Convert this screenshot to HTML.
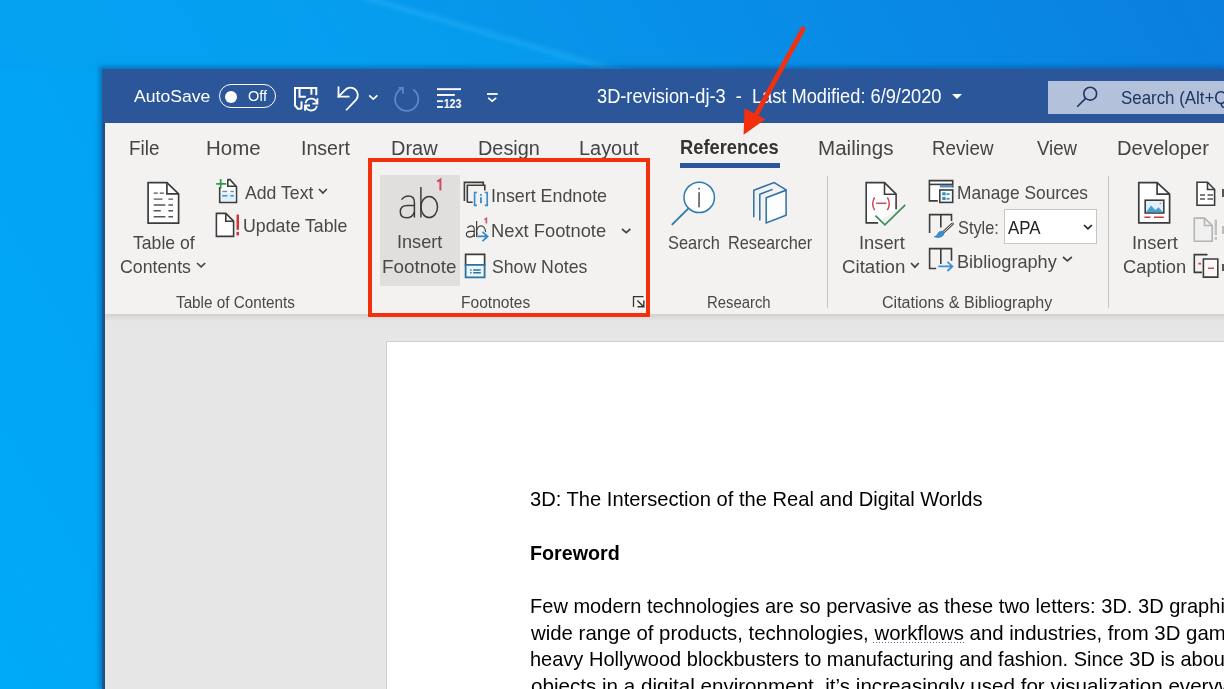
<!DOCTYPE html><html><head><meta charset="utf-8"><style>
html,body{margin:0;padding:0;width:1224px;height:689px;overflow:hidden;}
body{position:relative;font-family:"Liberation Sans",sans-serif;background:#0a8ee6;}
.t{position:absolute;white-space:nowrap;transform-origin:0 0;font-family:"Liberation Sans",sans-serif;}
svg{overflow:visible}
</style></head><body><svg style="position:absolute;left:0;top:0" width="1224" height="689">
<defs>
<linearGradient id="dg" x1="0" y1="689" x2="1224" y2="0" gradientUnits="userSpaceOnUse">
<stop offset="0" stop-color="#00aaf7"/><stop offset="0.35" stop-color="#03a0f2"/><stop offset="0.55" stop-color="#0795ea"/><stop offset="1" stop-color="#0a7fe0"/></linearGradient>
<filter id="bl" x="-20%" y="-200%" width="140%" height="500%"><feGaussianBlur stdDeviation="2.5"/></filter>
</defs>
<rect width="1224" height="689" fill="url(#dg)"/>
<polygon points="0,0 375,0 612,70 0,70" fill="#06a0f0" opacity="0.6"/>
<line x1="354" y1="-6" x2="634" y2="75.6" stroke="#40c0ff" stroke-width="3" opacity="0.55" filter="url(#bl)"/>
</svg>
<div style="position:absolute;left:99px;top:66px;width:1125px;height:623px;background:rgba(0,50,110,0.35);filter:blur(2px)"></div>
<div style="position:absolute;left:102px;top:69px;width:1122px;height:54px;background:#2b579a"></div>
<div style="position:absolute;left:104.8px;top:122.6px;width:1119.2px;height:191.4px;background:#f3f2f1"></div>
<div style="position:absolute;left:104.8px;top:314px;width:1119.2px;height:375px;background:#e6e6e6"></div>
<div style="position:absolute;left:104.8px;top:314px;width:1119.2px;height:7px;background:linear-gradient(#d3d1cf,#e6e6e6)"></div>
<div style="position:absolute;left:102px;top:123px;width:2.8px;height:566px;background:linear-gradient(90deg,#1d5b98,#234a80)"></div>
<div style="position:absolute;left:386px;top:341px;width:838px;height:348px;background:#fff;border-left:1px solid #cfcfcf;border-top:1px solid #cfcfcf;box-sizing:border-box"></div>
<div class="t" style="left:134.46px;top:89.38px;font-size:16.8px;line-height:16.8px;color:#ffffff;font-weight:normal;transform:scaleX(1.0476);">AutoSave</div>
<div style="position:absolute;left:219px;top:84px;width:57px;height:24px;border:1.7px solid #fff;border-radius:12px;box-sizing:border-box"></div>
<div style="position:absolute;left:225px;top:90.5px;width:12px;height:12px;background:#fff;border-radius:6px"></div>
<div class="t" style="left:247.71px;top:89.35px;font-size:14px;line-height:14px;color:#ffffff;font-weight:normal;transform:scaleX(1.0349);">Off</div>
<svg style="position:absolute;left:294px;top:86.6px" width="26" height="26" viewBox="0 0 26 26"><g fill="none" stroke="#fff" stroke-width="2"><path d="M7.5 21.7 H3.8 L1 18.5 V1 H22.3 V8.2"/><path d="M7.5 21.7 V14.3"/><path d="M5.5 1 V9.8 H11.8"/><path d="M17.4 1 V7.7"/></g><g fill="none" stroke="#fff" stroke-width="1.8"><path d="M11.5 16.3 A5.9 5.9 0 0 1 22.9 15.9"/><path d="M23.4 11.3 V16.6 H18.4"/><path d="M22.9 18.9 A5.9 5.9 0 0 1 11.5 19.3"/><path d="M11 23.8 V18.5 H16"/></g></svg>
<svg style="position:absolute;left:336px;top:85px" width="26" height="27" viewBox="0 0 26 27"><g fill="none" stroke="#fff" stroke-width="1.8" stroke-linecap="square"><path d="M2.5 2.5 V11.7 H12.6"/><path d="M2.5 11.7 L9 5.2 A7.3 7.3 0 0 1 20 14.8 L10.7 24.6"/></g></svg>
<svg style="position:absolute;left:368px;top:94px" width="10" height="6" viewBox="0 0 10 6"><path d="M1.2 1.3 L5.3 5.2 L9.4 1.3" fill="none" stroke="#fff" stroke-width="1.6"/></svg>
<svg style="position:absolute;left:392px;top:85px" width="28" height="28" viewBox="0 0 28 28"><g fill="none" stroke="#5f86c6" stroke-width="1.8"><path d="M21.2 4.6 A11.6 11.6 0 1 1 9.6 3.8"/><path d="M6.5 2.8 H10.9 V8.8"/></g></svg>
<svg style="position:absolute;left:436px;top:87px" width="27" height="23" viewBox="0 0 27 23"><g fill="#fff"><rect x="1" y="1.2" width="24" height="1.9"/><rect x="1" y="7" width="17.8" height="1.9"/><rect x="1" y="13.3" width="5.9" height="1.8"/><rect x="1" y="19.1" width="5.9" height="1.8"/></g><text x="7.8" y="21" font-family="Liberation Sans" font-size="12.5" font-weight="bold" fill="#fff" textLength="17.4" lengthAdjust="spacingAndGlyphs">123</text></svg>
<svg style="position:absolute;left:486px;top:92px" width="13" height="11" viewBox="0 0 13 11"><rect x="1" y="1.1" width="10.7" height="1.8" fill="#fff"/><path d="M2.2 5.8 L6.2 9.1 L10.2 5.8" fill="none" stroke="#fff" stroke-width="1.7"/></svg>
<div class="t" style="left:597.12px;top:87.41px;font-size:19.6px;line-height:19.6px;color:#ffffff;font-weight:normal;transform:scaleX(0.9303);white-space:pre;">3D-revision-dj-3  -  Last Modified: 6/9/2020</div>
<svg style="position:absolute;left:952px;top:94px" width="10" height="5" viewBox="0 0 10 5"><path d="M0 0 L10 0 L5 5 Z" fill="#fff"/></svg>
<div style="position:absolute;left:1048px;top:81px;width:176px;height:33px;background:#b3c2da"></div>
<div class="t" style="left:1120.94px;top:88.94px;font-size:18.5px;line-height:18.5px;color:#1d3563;font-weight:normal;transform:scaleX(0.9126);">Search (Alt+Q)</div>
<svg style="position:absolute;left:1074px;top:85px" width="30" height="25" viewBox="0 0 30 25"><circle cx="16.2" cy="8.7" r="6.4" fill="none" stroke="#1d3563" stroke-width="1.6"/><path d="M11.6 13.4 L3.2 21.8" stroke="#1d3563" stroke-width="1.6"/></svg>
<div class="t" style="left:129.44px;top:137.87px;font-size:20px;line-height:20px;color:#444444;font-weight:normal;transform:scaleX(0.9428);">File</div>
<div class="t" style="left:206.31px;top:137.87px;font-size:20px;line-height:20px;color:#444444;font-weight:normal;transform:scaleX(1.0226);">Home</div>
<div class="t" style="left:301.19px;top:137.87px;font-size:20px;line-height:20px;color:#444444;font-weight:normal;transform:scaleX(0.9792);">Insert</div>
<div class="t" style="left:391.35px;top:137.87px;font-size:20px;line-height:20px;color:#444444;font-weight:normal;transform:scaleX(0.9978);">Draw</div>
<div class="t" style="left:478.36px;top:137.87px;font-size:20px;line-height:20px;color:#444444;font-weight:normal;transform:scaleX(0.9941);">Design</div>
<div class="t" style="left:579.36px;top:137.87px;font-size:20px;line-height:20px;color:#444444;font-weight:normal;transform:scaleX(0.9957);">Layout</div>
<div class="t" style="left:818.30px;top:137.87px;font-size:20px;line-height:20px;color:#444444;font-weight:normal;transform:scaleX(1.0282);">Mailings</div>
<div class="t" style="left:932.45px;top:137.87px;font-size:20px;line-height:20px;color:#444444;font-weight:normal;transform:scaleX(0.9375);">Review</div>
<div class="t" style="left:1036.91px;top:137.87px;font-size:20px;line-height:20px;color:#444444;font-weight:normal;transform:scaleX(0.9313);">View</div>
<div class="t" style="left:1117.34px;top:137.87px;font-size:20px;line-height:20px;color:#444444;font-weight:normal;transform:scaleX(1.0090);">Developer</div>
<div class="t" style="left:680.06px;top:138.06px;font-size:19.3px;line-height:19.3px;color:#333333;font-weight:bold;transform:scaleX(0.9495);">References</div>
<div style="position:absolute;left:680px;top:163px;width:100px;height:5px;background:#2b579a"></div>
<svg style="position:absolute;left:146px;top:181px" width="35" height="45" viewBox="0 0 35 45"><path d="M2.1 1.6 H20.9 L32.6 12.8 V42.2 H2.1 Z" fill="#fff" stroke="#3c3c3c" stroke-width="1.7"/><path d="M20.9 1.6 V12.8 H32.6" fill="none" stroke="#3c3c3c" stroke-width="1.7"/><g stroke="#555" stroke-width="1.4"><path d="M7.7 12.1 H11.8 M13.8 12.1 H17.9 M7.7 18.1 H16.5 M22.4 18.1 H27 M7.7 24 H19.4 M22.4 24 H27 M7.7 29.8 H14.8 M22.4 29.8 H27 M7.7 35.8 H19.4 M22.4 35.8 H27"/></g></svg>
<div class="t" style="left:132.90px;top:233.64px;font-size:18.5px;line-height:18.5px;color:#484848;font-weight:normal;transform:scaleX(0.9530);">Table of</div>
<div class="t" style="left:119.81px;top:257.64px;font-size:18.5px;line-height:18.5px;color:#484848;font-weight:normal;transform:scaleX(0.9576);">Contents</div>
<svg style="position:absolute;left:195px;top:260.7px" width="12.199999999999989" height="7.800000000000011" viewBox="0 0 12.199999999999989 7.800000000000011"><path d="M2 2 L6.10 5.80 L10.20 2" fill="none" stroke="#444" stroke-width="1.7"/></svg>
<svg style="position:absolute;left:216px;top:177px" width="24" height="28" viewBox="0 0 24 28"><path d="M3.7 10 V25.4 H20.5 V9.8 L14 2.6 H11.5" fill="#fff" stroke="#3c3c3c" stroke-width="1.6"/><rect x="5" y="16" width="14.5" height="8.5" fill="#dff0fa"/><path d="M11.8 2.6 V9.2 H20.5" fill="none" stroke="#3c3c3c" stroke-width="1.6"/><path d="M0.2 6.9 H10.3 M4.7 2 V11.7" stroke="#2f9a4a" stroke-width="1.7"/><path d="M6.3 14.6 H11.3 M14.4 14.6 H17.9" stroke="#6b8fa8" stroke-width="1.5"/><path d="M6.3 18.8 H11.3 M14.4 18.8 H17.9" stroke="#3b8fcf" stroke-width="1.6"/></svg>
<div class="t" style="left:244.56px;top:183.64px;font-size:18.5px;line-height:18.5px;color:#484848;font-weight:normal;transform:scaleX(0.9544);">Add Text</div>
<svg style="position:absolute;left:317.4px;top:186.9px" width="11.800000000000011" height="8.099999999999994" viewBox="0 0 11.800000000000011 8.099999999999994"><path d="M2 2 L5.90 6.10 L9.80 2" fill="none" stroke="#444" stroke-width="1.7"/></svg>
<svg style="position:absolute;left:214px;top:211px" width="28" height="28" viewBox="0 0 28 28"><path d="M2.4 2.4 H11.8 L19.6 10.2 V25.4 H2.4 Z" fill="#fff" stroke="#3c3c3c" stroke-width="1.6"/><path d="M11.8 2.4 V10.2 H19.6" fill="none" stroke="#3c3c3c" stroke-width="1.6"/><rect x="22.5" y="3.6" width="2.5" height="15.2" fill="#d13438"/><rect x="22.5" y="20.9" width="2.5" height="3.5" fill="#d13438"/></svg>
<div class="t" style="left:243.22px;top:217.44px;font-size:18.5px;line-height:18.5px;color:#484848;font-weight:normal;transform:scaleX(0.9599);">Update Table</div>
<div style="position:absolute;left:380px;top:175px;width:80px;height:111px;background:#e1dfdd"></div>
<svg style="position:absolute;left:393px;top:175px" width="50" height="50" viewBox="0 0 50 50"><g fill="none" stroke="#3b3b3b" stroke-width="1.5"><path d="M8.6 24.6 Q11.5 21 15.5 21 Q21.4 21 21.4 27.5 V42.6"/><path d="M21.4 30.6 H14.5 Q7.3 30.6 7.3 36.8 Q7.3 42.8 13.6 42.8 Q19.5 42.8 21.4 37"/><path d="M27.9 12 V42.6"/><ellipse cx="36.2" cy="32" rx="8.3" ry="10.6"/></g></svg>
<svg style="position:absolute;left:436px;top:178px" width="8" height="14" viewBox="0 0 8 14"><path d="M1.2 3.6 L4.4 1.6 V12.6" fill="none" stroke="#cf4a58" stroke-width="2"/></svg>
<div class="t" style="left:396.82px;top:233.34px;font-size:18.5px;line-height:18.5px;color:#484848;font-weight:normal;transform:scaleX(0.9797);">Insert</div>
<div class="t" style="left:382.45px;top:257.74px;font-size:18.5px;line-height:18.5px;color:#484848;font-weight:normal;transform:scaleX(1.0182);">Footnote</div>
<svg style="position:absolute;left:462px;top:180px" width="30" height="28" viewBox="0 0 30 28"><g fill="none" stroke="#3c3c3c" stroke-width="1.6"><path d="M2.4 20.9 V2.4 H21.3 V5.6"/><path d="M5.3 22.3 H10.6 M5.3 22.3 V5.3 H22.8 V10.6"/></g><g fill="none" stroke="#3b8fcf" stroke-width="1.7"><path d="M15 12.5 H12.6 V25.3 H15 M22.8 12.5 H25.2 V25.3 H22.8"/></g><rect x="18" y="14" width="1.9" height="1.7" fill="#3b8fcf"/><rect x="18" y="17.2" width="1.9" height="6" fill="#3b8fcf"/></svg>
<div class="t" style="left:491.25px;top:186.84px;font-size:18.5px;line-height:18.5px;color:#484848;font-weight:normal;transform:scaleX(0.9644);">Insert Endnote</div>
<svg style="position:absolute;left:462px;top:216px" width="30" height="28" viewBox="0 0 30 28"><g fill="none" stroke="#3b3b3b" stroke-width="1.15"><path d="M5.3 11.8 Q7.1 9.8 9.2 9.8 Q12.2 9.8 12.2 13 V21.1"/><path d="M12.2 15.3 H8.6 Q4.4 15.3 4.4 18.3 Q4.4 21.1 7.8 21.1 Q11 21.1 12.2 18.4"/><path d="M14.6 5 V21"/><ellipse cx="19.05" cy="15.6" rx="4.45" ry="5.8"/></g><path d="M15.2 20.4 H25.7 M20.5 15.8 L25.7 20.4 L20.5 25.2" fill="none" stroke="#f3f2f1" stroke-width="3.6"/><path d="M15.2 20.4 H25.7 M20.5 15.8 L25.7 20.4 L20.5 25.2" fill="none" stroke="#2f86c4" stroke-width="1.6"/><path d="M22.4 3.6 L24.4 2.4 V7.6" fill="none" stroke="#c65a66" stroke-width="1.6"/></svg>
<div class="t" style="left:491.49px;top:222.14px;font-size:18.5px;line-height:18.5px;color:#484848;font-weight:normal;transform:scaleX(0.9906);">Next Footnote</div>
<svg style="position:absolute;left:619.6px;top:227.0px" width="12.399999999999977" height="7.700000000000017" viewBox="0 0 12.399999999999977 7.700000000000017"><path d="M2 2 L6.20 5.70 L10.40 2" fill="none" stroke="#444" stroke-width="1.7"/></svg>
<svg style="position:absolute;left:463px;top:252px" width="26" height="28" viewBox="0 0 26 28"><path d="M2.6 2.4 H21.6 V12.9 H2.6 Z" fill="#fff" stroke="#3c3c3c" stroke-width="1.7"/><path d="M2.6 12.9 H21.6 V25.4 H2.6 Z" fill="#e9f6fc" stroke="#2e70a0" stroke-width="1.8"/><path d="M7.2 18 H8.6 M7.2 20.8 H8.6 M10.2 18 H17.8 M10.2 20.8 H17.8" stroke="#2e70a0" stroke-width="1.4"/></svg>
<div class="t" style="left:492.20px;top:258.44px;font-size:18.5px;line-height:18.5px;color:#484848;font-weight:normal;transform:scaleX(0.9554);">Show Notes</div>
<div class="t" style="left:461.22px;top:294.86px;font-size:16px;line-height:16px;color:#484848;font-weight:normal;transform:scaleX(0.9729);">Footnotes</div>
<svg style="position:absolute;left:630px;top:293px" width="18" height="18" viewBox="0 0 18 18"><path d="M3.5 14 V3.7 H13.5" fill="none" stroke="#333" stroke-width="1.3"/><path d="M7.4 7.4 L13.4 13.4 M7.5 13.8 H13.8 V7.5" fill="none" stroke="#333" stroke-width="1.4"/></svg>
<div class="t" style="left:175.86px;top:294.86px;font-size:16px;line-height:16px;color:#484848;font-weight:normal;transform:scaleX(0.9539);">Table of Contents</div>
<svg style="position:absolute;left:668px;top:178px" width="50" height="50" viewBox="0 0 50 50"><circle cx="31.2" cy="19.4" r="15.2" fill="#fff" stroke="#2e7cab" stroke-width="1.5"/><path d="M20.2 30.6 L3.8 46.9" stroke="#2e7cab" stroke-width="1.9"/><rect x="30.4" y="9.8" width="1.4" height="1.6" fill="#333"/><rect x="30.4" y="14.2" width="1.3" height="15.1" fill="#333"/></svg>
<div class="t" style="left:668.26px;top:233.64px;font-size:18.5px;line-height:18.5px;color:#484848;font-weight:normal;transform:scaleX(0.8850);">Search</div>
<svg style="position:absolute;left:750px;top:179px" width="40" height="48" viewBox="0 0 40 48"><g fill="none" stroke="#2e6fa8" stroke-width="1.5" stroke-linejoin="miter"><path d="M3.8 38.3 V11.2 L24.2 3.6 L36.1 10.8"/><path d="M9.8 41.5 V15.2 L22.6 10.4"/></g><path d="M16.2 18.8 L36.1 11.2 V36.3 L16.2 43.9 Z" fill="#fbfdff" stroke="#2e6fa8" stroke-width="1.5"/></svg>
<div class="t" style="left:727.96px;top:233.64px;font-size:18.5px;line-height:18.5px;color:#484848;font-weight:normal;transform:scaleX(0.8806);">Researcher</div>
<div class="t" style="left:706.67px;top:294.86px;font-size:16px;line-height:16px;color:#484848;font-weight:normal;transform:scaleX(0.9286);">Research</div>
<div style="position:absolute;left:827px;top:176px;width:1px;height:132px;background:#c8c6c4"></div>
<svg style="position:absolute;left:862px;top:180px" width="48" height="48" viewBox="0 0 48 48"><path d="M16.1 42.9 H4.2 V2.6 H22.5 L34.1 14.2 V29.3" fill="#fff" stroke="#3c3c3c" stroke-width="1.6"/><path d="M22.5 2.6 V14.2 H34.1" fill="none" stroke="#3c3c3c" stroke-width="1.6"/><g fill="none" stroke="#c94a55" stroke-width="1.5"><path d="M12.6 17.3 Q8.9 23.7 12.6 30.1"/><path d="M25.4 17.3 Q29.1 23.7 25.4 30.1"/><path d="M14.1 23.3 H24.5"/></g><path d="M13.4 35.7 L22.9 44.9 L43.3 24.9" fill="none" stroke="#3a8f5a" stroke-width="1.7"/></svg>
<div class="t" style="left:858.71px;top:234.04px;font-size:18.5px;line-height:18.5px;color:#484848;font-weight:normal;transform:scaleX(0.9887);">Insert</div>
<div class="t" style="left:842.17px;top:258.14px;font-size:18.5px;line-height:18.5px;color:#484848;font-weight:normal;transform:scaleX(1.0093);">Citation</div>
<svg style="position:absolute;left:908.6px;top:260.9px" width="11.799999999999955" height="8.200000000000045" viewBox="0 0 11.799999999999955 8.200000000000045"><path d="M2 2 L5.90 6.20 L9.80 2" fill="none" stroke="#444" stroke-width="1.7"/></svg>
<svg style="position:absolute;left:927px;top:178px" width="28" height="28" viewBox="0 0 28 28"><path d="M10.8 22.9 H2.4 V2.6 H25.7 V9.5" fill="#fff" stroke="#3c3c3c" stroke-width="1.6"/><path d="M2.4 6.4 H25.7" stroke="#3c3c3c" stroke-width="1.6"/><rect x="12.8" y="6.9" width="12.7" height="2.6" fill="#5c8fc0"/><rect x="12.8" y="12" width="12.9" height="12.4" fill="#f4fbff" stroke="#3c3c3c" stroke-width="1.6"/><g fill="#3a86b8"><rect x="15.3" y="14.3" width="3.3" height="3"/><rect x="15.3" y="19" width="3.3" height="3"/><rect x="19.6" y="15.3" width="3" height="1.6"/><rect x="19.6" y="20" width="3" height="1.6"/></g></svg>
<div class="t" style="left:957.17px;top:183.84px;font-size:18.5px;line-height:18.5px;color:#484848;font-weight:normal;transform:scaleX(0.9369);">Manage Sources</div>
<svg style="position:absolute;left:927px;top:211px" width="28" height="28" viewBox="0 0 28 28"><path d="M2.6 21.9 V3.6 H13.8 V16.5 M13.8 3.6 H24.5 V10" fill="none" stroke="#3c3c3c" stroke-width="1.6"/><path d="M25.6 12.8 L16 21.5" stroke="#3c3c3c" stroke-width="2.6" stroke-linecap="round"/><path d="M25.6 12.8 L16 21.5" stroke="#fff" stroke-width="0.9" stroke-linecap="round"/><path d="M15.5 20.5 Q12 19.5 10.6 23 Q9.5 25.5 7.2 25.8 Q11.5 27.5 15 25.5 Q17.5 23.5 16.8 21.5 Z" fill="#3b8fcf" stroke="#2b6fa8" stroke-width="0.6"/></svg>
<div class="t" style="left:957.87px;top:219.14px;font-size:18.5px;line-height:18.5px;color:#484848;font-weight:normal;transform:scaleX(0.8822);">Style:</div>
<div style="position:absolute;left:1004px;top:209px;width:93px;height:35px;background:#fff;border:1px solid #c8c6c4;box-sizing:border-box"></div>
<div class="t" style="left:1007.76px;top:219.14px;font-size:18.5px;line-height:18.5px;color:#222222;font-weight:normal;transform:scaleX(0.9110);">APA</div>
<svg style="position:absolute;left:1082.3px;top:222.8px" width="11.900000000000091" height="7.800000000000011" viewBox="0 0 11.900000000000091 7.800000000000011"><path d="M2 2 L5.95 5.80 L9.90 2" fill="none" stroke="#222" stroke-width="1.7"/></svg>
<svg style="position:absolute;left:927px;top:246px" width="28" height="28" viewBox="0 0 28 28"><path d="M9.2 22.5 H2.6 V2.6 H13.8 V17.9 M13.8 2.6 H24.5 V14.8" fill="none" stroke="#3c3c3c" stroke-width="1.6"/><path d="M11.3 20.4 H25.3 M20.4 15.9 L25.4 20.4 L20.4 25" fill="none" stroke="#3b8fcf" stroke-width="1.7"/></svg>
<div class="t" style="left:957.10px;top:253.44px;font-size:18.5px;line-height:18.5px;color:#484848;font-weight:normal;transform:scaleX(0.9798);">Bibliography</div>
<svg style="position:absolute;left:1060.7px;top:255.2px" width="12.799999999999955" height="7.900000000000034" viewBox="0 0 12.799999999999955 7.900000000000034"><path d="M2 2 L6.40 5.90 L10.80 2" fill="none" stroke="#444" stroke-width="1.7"/></svg>
<div class="t" style="left:881.60px;top:294.86px;font-size:16px;line-height:16px;color:#484848;font-weight:normal;transform:scaleX(1.0021);">Citations &amp; Bibliography</div>
<div style="position:absolute;left:1108px;top:176px;width:1px;height:132px;background:#c8c6c4"></div>
<svg style="position:absolute;left:1135px;top:180px" width="38" height="48" viewBox="0 0 38 48"><path d="M3.8 2.7 H22.1 L34.6 14.2 V42.9 H3.8 Z" fill="#fff" stroke="#3c3c3c" stroke-width="1.7"/><path d="M22.1 2.7 V14.2 H34.6" fill="none" stroke="#3c3c3c" stroke-width="1.7"/><rect x="10.2" y="20.2" width="18.6" height="12.8" fill="#dff0fb" stroke="#3c3c3c" stroke-width="1.6"/><path d="M11 32.2 L16 25.5 L20.5 30 L23.5 27.3 L28 32.2 Z" fill="#4a9fd0"/><circle cx="25.5" cy="23.3" r="0.9" fill="#e0a040"/><path d="M9.4 37.3 H15.4 M18.9 37.3 H28.8" stroke="#d13438" stroke-width="1.6"/></svg>
<div class="t" style="left:1131.60px;top:234.04px;font-size:18.5px;line-height:18.5px;color:#484848;font-weight:normal;transform:scaleX(0.9910);">Insert</div>
<div class="t" style="left:1123.08px;top:258.14px;font-size:18.5px;line-height:18.5px;color:#484848;font-weight:normal;transform:scaleX(0.9894);">Caption</div>
<svg style="position:absolute;left:1193px;top:180px" width="31" height="30" viewBox="0 0 31 30"><path d="M4 2.2 H14.5 L21.6 9.5 V25.3 H4 Z" fill="#fff" stroke="#3c3c3c" stroke-width="1.6"/><path d="M14.5 2.2 V9.5 H21.6" fill="none" stroke="#3c3c3c" stroke-width="1.6"/><path d="M7 15 H12 M14.5 15 H20 M7 19 H12 M14.5 19 H20" stroke="#555" stroke-width="1.3"/></svg>
<svg style="position:absolute;left:1193px;top:215px" width="31" height="30" viewBox="0 0 31 30"><path d="M1.3 3.1 H11.5 L19.2 10.5 V26.2 H1.3 Z" fill="#f0f0f0" stroke="#b4b4b4" stroke-width="1.6"/><path d="M11.5 3.1 V10.5 H19.2" fill="none" stroke="#b4b4b4" stroke-width="1.6"/><rect x="21.6" y="4.6" width="2.4" height="15.5" fill="#c0c0c0"/><rect x="21.6" y="22" width="2.4" height="2.8" fill="#c0c0c0"/></svg>
<svg style="position:absolute;left:1192px;top:251px" width="32" height="30" viewBox="0 0 32 30"><path d="M15.5 3.6 H2.3 V21.4 H10" fill="none" stroke="#3c3c3c" stroke-width="1.6"/><path d="M11.4 8 H25.8 V26.1 H11.4 Z" fill="#fdf8f8" stroke="#3c3c3c" stroke-width="1.6"/><path d="M6.3 12.6 H9 M16 17.3 H22" stroke="#c94a55" stroke-width="1.6"/></svg>
<div style="position:absolute;left:1222.4px;top:189.4px;width:2px;height:7.2px;background:#555"></div>
<div style="position:absolute;left:1222.4px;top:226px;width:2px;height:8px;background:#bbb"></div>
<div style="position:absolute;left:1222.4px;top:264.4px;width:2px;height:6.4px;background:#555"></div>
<div class="t" style="left:530.14px;top:489.19px;font-size:20.8px;line-height:20.8px;color:#000000;font-weight:normal;transform:scaleX(0.9681);">3D: The Intersection of the Real and Digital Worlds</div>
<div class="t" style="left:529.57px;top:543.27px;font-size:20px;line-height:20px;color:#000000;font-weight:bold;transform:scaleX(0.9847);">Foreword</div>
<div class="t" style="left:529.75px;top:596.19px;font-size:20.8px;line-height:20.8px;color:#000000;font-weight:normal;transform:scaleX(0.9633);">Few modern technologies are so pervasive as these two letters: 3D. 3D graphics are used in a</div>
<div class="t" style="left:531.45px;top:622.79px;font-size:20.8px;line-height:20.8px;color:#000000;font-weight:normal;transform:scaleX(0.9804);">wide range of products, technologies, workflows and industries, from 3D games and effects-</div>
<div class="t" style="left:530.05px;top:649.39px;font-size:20.8px;line-height:20.8px;color:#000000;font-weight:normal;transform:scaleX(0.9618);">heavy Hollywood blockbusters to manufacturing and fashion. Since 3D is about creating</div>
<div class="t" style="left:530.52px;top:675.99px;font-size:20.8px;line-height:20.8px;color:#000000;font-weight:normal;transform:scaleX(0.9905);">objects in a digital environment, it’s increasingly used for visualization everywhere</div>
<div style="position:absolute;left:872.8px;top:642px;width:91.5px;height:1.3px;background:repeating-linear-gradient(90deg,#6d5fae 0,#6d5fae 1.5px,transparent 1.5px,transparent 3px)"></div>
<div style="position:absolute;left:367.5px;top:158.4px;width:282.7px;height:158.6px;border:4.7px solid #f0300f;box-sizing:border-box"></div>
<svg style="position:absolute;left:730px;top:20px" width="90" height="120" viewBox="0 0 90 120"><line x1="73" y1="9" x2="26" y2="95" stroke="#f2300f" stroke-width="4.8" stroke-linecap="round"/><path d="M13.6 114.8 L14.4 88.3 L35.4 99.2 Z" fill="#f2300f"/></svg></body></html>
